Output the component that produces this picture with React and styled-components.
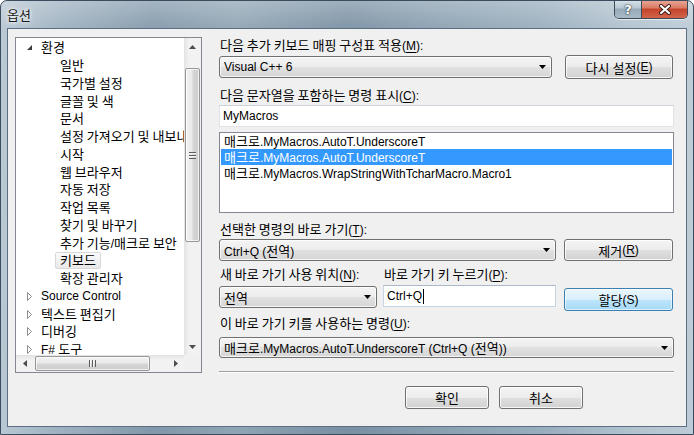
import React from 'react';
import styled, { createGlobalStyle } from 'styled-components';

const GlobalStyle = createGlobalStyle`
  html, body {
    margin: 0;
    padding: 0;
    background: #ffffff;
  }
  body {
    font-family: "Liberation Sans", "Noto Sans CJK KR", sans-serif;
    font-size: 12px;
    color: #000;
  }
  * { box-sizing: border-box; }
`;

//tree data
const treeItems = [
  { label: '환경', level: 0, expander: 'open' },
  { label: '일반', level: 1 },
  { label: '국가별 설정', level: 1 },
  { label: '글꼴 및 색', level: 1 },
  { label: '문서', level: 1 },
  { label: '설정 가져오기 및 내보내기', level: 1 },
  { label: '시작', level: 1 },
  { label: '웹 브라우저', level: 1 },
  { label: '자동 저장', level: 1 },
  { label: '작업 목록', level: 1 },
  { label: '찾기 및 바꾸기', level: 1 },
  { label: '추가 기능/매크로 보안', level: 1 },
  { label: '키보드', level: 1, selected: true },
  { label: '확장 관리자', level: 1 },
  { label: 'Source Control', level: 0, expander: 'closed' },
  { label: '텍스트 편집기', level: 0, expander: 'closed' },
  { label: '디버깅', level: 0, expander: 'closed' },
  { label: 'F# 도구', level: 0, expander: 'closed' },
];

const commands = [
  '매크로.MyMacros.AutoT.UnderscoreT',
  '매크로.MyMacros.AutoT.UnderscoreT',
  '매크로.MyMacros.WrapStringWithTcharMacro.Macro1',
];

// hangul runs get the CJK face, a touch larger so they keep Malgun's width
const HANGUL_RUN = /([\uac00-\ud7a3]+(?:[ ]+[\uac00-\ud7a3]+)*)/;

function Txt({ children }) {
  return (
    <>
      {String(children).split(HANGUL_RUN).map((part, i) =>
        /[\uac00-\ud7a3]/.test(part) ? <Ko key={i}>{part}</Ko> : part
      )}
    </>
  );
}

function Arrow({ dir = 'down', color = '#000' }) {
  const pts = {
    down: '0,0 7,0 3.5,4',
    up: '0,4 7,4 3.5,0',
    left: '4,0 4,7 0,3.5',
    right: '0,0 0,7 4,3.5',
  }[dir];
  const vertical = dir === 'up' || dir === 'down';
  return (
    <svg width={vertical ? 7 : 4} height={vertical ? 4 : 7} viewBox={vertical ? '0 0 7 4' : '0 0 4 7'}>
      <polygon points={pts} fill={color} />
    </svg>
  );
}

function Expander({ type }) {
  if (type === 'open') {
    return (
      <ExpanderBox>
        <svg width="7" height="7" viewBox="0 0 7 7">
          <polygon points="6,1 6,6 1,6" fill="#3c3c3c" />
        </svg>
      </ExpanderBox>
    );
  }
  return (
    <ExpanderBox>
      <svg width="7" height="9" viewBox="0 0 7 9">
        <polygon points="1.5,0.5 1.5,8.5 5.5,4.5" fill="#fff" stroke="#8c8c8c" strokeWidth="1" />
      </svg>
    </ExpanderBox>
  );
}

function App() {
  return (
    <>
      <GlobalStyle />
      <Window>
        <TitleBar>
          <Title><Txt>옵션</Txt></Title>
          <Controls>
            <HelpBtn>?</HelpBtn>
            <CloseBtn>
              <svg width="14" height="11" viewBox="0 0 14 11">
                <path d="M3 2 L11 9 M11 2 L3 9" stroke="#3b1a14" strokeWidth="4" strokeLinecap="round" />
                <path d="M3 2 L11 9 M11 2 L3 9" stroke="#fff" strokeWidth="2.2" strokeLinecap="round" />
              </svg>
            </CloseBtn>
          </Controls>
        </TitleBar>

        <Client>
          <Tree>
            <TreeContent>
              {treeItems.map((item, i) => (
                <TreeRow key={i} $level={item.level}>
                  {item.expander && <Expander type={item.expander} />}
                  <TreeLabel $selected={item.selected}><Txt>{item.label}</Txt></TreeLabel>
                </TreeRow>
              ))}
            </TreeContent>
            <ScrollBar $vertical>
              <ScrollArrow $vertical><Arrow dir="up" color="#4d4d4d" /></ScrollArrow>
              <Thumb $vertical $offset={13} $length={174}><Grip $vertical /></Thumb>
              <ScrollArrow $vertical $end><Arrow dir="down" color="#4d4d4d" /></ScrollArrow>
            </ScrollBar>
            <ScrollBar>
              <ScrollArrow><Arrow dir="left" color="#4d4d4d" /></ScrollArrow>
              <Thumb $offset={2} $length={115}><Grip /></Thumb>
              <ScrollArrow $end><Arrow dir="right" color="#4d4d4d" /></ScrollArrow>
            </ScrollBar>
            <Corner />
          </Tree>

          <Panel>
            <Label><Txt>다음 추가 키보드 매핑 구성표 적용</Txt>(<u>M</u>):</Label>
            <FieldRow $mt={2}>
              <Combo $w={333}>
                <span>Visual C++ 6</span>
                <ComboArrow><Arrow /></ComboArrow>
              </Combo>
              <Button $w={108} $h={24} $ml={13}><Txt>다시 설정</Txt>(<u>E</u>)</Button>
            </FieldRow>

            <Label $mt={8}><Txt>다음 문자열을 포함하는 명령 표시</Txt>(<u>C</u>):</Label>
            <TextBox $mt={2} $light>MyMacros</TextBox>

            <ListBox>
              {commands.map((c, i) => (
                <ListRow key={i} $selected={i === 1}><Txt>{c}</Txt></ListRow>
              ))}
            </ListBox>

            <Label $mt={8}><Txt>선택한 명령의 바로 가기</Txt>(<u>T</u>):</Label>
            <FieldRow $mt={2}>
              <Combo $w={337}>
                <span>Ctrl+Q (<Txt>전역</Txt>)</span>
                <ComboArrow><Arrow /></ComboArrow>
              </Combo>
              <Button $w={109} $ml={8}><Txt>제거</Txt>(<u>R</u>)</Button>
            </FieldRow>

            <FieldRow $mt={5}>
              <Label $w={164}><Txt>새 바로 가기 사용 위치</Txt>(<u>N</u>):</Label>
              <Label><Txt>바로 가기 키 누르기</Txt>(<u>P</u>):</Label>
            </FieldRow>
            <FieldRow $mt={3} $align="flex-start">
              <Combo $w={158} $mt={1}>
                <span><Txt>전역</Txt></span>
                <ComboArrow><Arrow /></ComboArrow>
              </Combo>
              <TextBox $w={173} $ml={6} $focused>
                Ctrl+Q<Caret />
              </TextBox>
              <Button $w={109} $h={23} $ml={8} $mt={3} $default><Txt>할당</Txt>(S)</Button>
            </FieldRow>

            <Label $mt={4}><Txt>이 바로 가기 키를 사용하는 명령</Txt>(<u>U</u>):</Label>
            <Combo $mt={6} $h={21}>
              <span><Txt>매크로</Txt>.MyMacros.AutoT.UnderscoreT (Ctrl+Q (<Txt>전역</Txt>))</span>
              <ComboArrow><Arrow /></ComboArrow>
            </Combo>

            <Separator />

            <Footer>
              <Button $w={84} $h={23}><Txt>확인</Txt></Button>
              <Button $w={84} $h={23} $ml={10}><Txt>취소</Txt></Button>
            </Footer>
          </Panel>
        </Client>
      </Window>
    </>
  );
}

const Ko = styled.span`
  font-family: "Noto Sans CJK KR", sans-serif;
  font-size: 13px;
`;

const Window = styled.div`
  width: 694px;
  height: 435px;
  display: flex;
  flex-direction: column;
  border: 1px solid #3a4c5d;
  border-radius: 7px 7px 0 0;
  overflow: hidden;
  background:
    linear-gradient(180deg, rgba(255,255,255,0.28) 0px, rgba(255,255,255,0.05) 28px, rgba(255,255,255,0) 100%),
    linear-gradient(90deg, #b8c7d3 0%, #9fb2c1 8%, #8298aa 22%, #8fa4b4 34%, #7990a3 50%, #8ba1b2 64%, #98adbd 78%, #b0c1ce 90%, #bccbd6 100%);
`;

const TitleBar = styled.div`
  height: 27px;
  display: flex;
  align-items: flex-start;
  padding-left: 6px;
`;

const Title = styled.div`
  margin-top: 5px;
  line-height: 18px;
  color: #1b1b1b;
  text-shadow: 0 0 6px #ffffff, 0 0 3px #ffffff;
`;

const Controls = styled.div`
  margin-left: auto;
  margin-right: 5px;
  display: flex;
  height: 19px;
  margin-top: -1px;
  border: 1px solid #3b4a58;
  border-top: none;
  border-radius: 0 0 5px 5px;
  overflow: hidden;
  box-shadow: 0 1px 0 rgba(255,255,255,0.6);
`;

const HelpBtn = styled.div`
  width: 27px;
  display: flex;
  align-items: center;
  justify-content: center;
  font-family: "DejaVu Sans", sans-serif;
  font-weight: bold;
  font-size: 13px;
  color: #fff;
  text-shadow: 0 0 2px #202a33, 0 0 1px #202a33;
  border-right: 1px solid #3b4a58;
  background: linear-gradient(180deg, #d9e2e9 0%, #b7c6d2 45%, #96a9b8 50%, #a9bac7 100%);
`;

const CloseBtn = styled.div`
  width: 45px;
  display: flex;
  align-items: center;
  justify-content: center;
  background: linear-gradient(180deg, #e9a99b 0%, #d97a63 45%, #c4432a 50%, #d2654c 100%);
`;

const Client = styled.div`
  flex: 1;
  margin: 0 6px 7px 6px;
  border: 1px solid #5d7083;
  background: #f0f0f0;
  padding: 8px 12px 0 7px;
  display: grid;
  grid-template-columns: 187px 1fr;
  column-gap: 17px;
  align-items: start;
`;

const Tree = styled.div`
  height: 336px;
  border: 1px solid #828790;
  background: #fff;
  display: grid;
  grid-template-columns: 1fr 17px;
  grid-template-rows: 1fr 17px;
  overflow: hidden;
`;

const TreeContent = styled.div`
  overflow: hidden;
  white-space: nowrap;
  padding-top: 1px;
`;

const TreeRow = styled.div`
  height: 17.75px;
  display: flex;
  align-items: center;
  padding-left: ${p => (p.$level === 0 ? 10 : 44)}px;
`;

const ExpanderBox = styled.span`
  width: 15px;
  display: inline-flex;
  align-items: center;
`;

const TreeLabel = styled.span`
  line-height: 14px;
  padding: ${p => (p.$selected ? '0 4px' : '0')};
  margin-left: ${p => (p.$selected ? '-5px' : '0')};
  border: ${p => (p.$selected ? '1px solid #d9d9d9' : 'none')};
  border-radius: 2px;
  background: ${p => (p.$selected ? 'linear-gradient(180deg, #fafafa, #e8e8e8)' : 'transparent')};
`;

const ScrollBar = styled.div`
  display: flex;
  flex-direction: ${p => (p.$vertical ? 'column' : 'row')};
  background: ${p => (p.$vertical
    ? 'linear-gradient(90deg, #e3e3e3 0%, #f2f2f2 30%, #f2f2f2 100%)'
    : 'linear-gradient(180deg, #e3e3e3 0%, #f2f2f2 30%, #f2f2f2 100%)')};
`;

const ScrollArrow = styled.div`
  flex: none;
  width: 17px;
  height: 17px;
  display: flex;
  align-items: center;
  justify-content: center;
  margin-${p => (p.$vertical ? 'top' : 'left')}: ${p => (p.$end ? 'auto' : '0')};
`;

const Thumb = styled.div`
  flex: none;
  display: flex;
  align-items: center;
  justify-content: center;
  border: 1px solid #979797;
  border-radius: 2px;
  ${p => (p.$vertical
    ? `width: 15px; height: ${p.$length}px; margin: ${p.$offset}px 0 0 1px;
       background: linear-gradient(90deg, #f3f3f3 0%, #e9e9e9 45%, #d6d6d6 55%, #cccccc 100%);`
    : `height: 15px; width: ${p.$length}px; margin: 1px 0 0 ${p.$offset}px;
       background: linear-gradient(180deg, #f3f3f3 0%, #e9e9e9 45%, #d6d6d6 55%, #cccccc 100%);`)}
  box-shadow: inset 0 0 0 1px rgba(255,255,255,0.7);
`;

const Grip = styled.div`
  width: 7px;
  height: 7px;
  background: repeating-linear-gradient(
    ${p => (p.$vertical ? '180deg' : '90deg')},
    #5c5c5c 0 1px, #f4f4f4 1px 2px, transparent 2px 3px
  );
`;

const Corner = styled.div`
  background: #f0f0f0;
`;

const Panel = styled.div`
  display: flex;
  flex-direction: column;
`;

const Label = styled.div`
  flex: none;
  height: 16px;
  line-height: 16px;
  padding-left: 1px;
  width: ${p => (p.$w ? `${p.$w}px` : 'auto')};
  margin-top: ${p => p.$mt ?? 0}px;
  white-space: nowrap;
  u { text-underline-offset: 2px; }
`;

const FieldRow = styled.div`
  display: flex;
  align-items: ${p => p.$align ?? 'center'};
  margin-top: ${p => p.$mt ?? 0}px;
`;

const Combo = styled.div`
  flex: none;
  width: ${p => (p.$w ? `${p.$w}px` : '100%')};
  height: ${p => p.$h ?? 22}px;
  margin-top: ${p => p.$mt ?? 0}px;
  display: flex;
  align-items: center;
  padding: 0 5px 0 4px;
  border: 1px solid #707070;
  border-radius: 3px;
  background: linear-gradient(180deg, #f4f4f4 0%, #ececec 50%, #e1e1e1 50%, #d6d6d6 100%);
  box-shadow: inset 0 0 0 1px rgba(255,255,255,0.75);
  white-space: nowrap;
`;

const ComboArrow = styled.span`
  margin-left: auto;
  display: flex;
  align-items: center;
`;

const Button = styled.div`
  flex: none;
  width: ${p => p.$w}px;
  height: ${p => p.$h ?? 22}px;
  margin-left: ${p => p.$ml ?? 0}px;
  margin-top: ${p => p.$mt ?? 0}px;
  display: flex;
  align-items: center;
  justify-content: center;
  border: 1px solid ${p => (p.$default ? '#3c7fb1' : '#707070')};
  border-radius: 3px;
  background: ${p => (p.$default
    ? 'linear-gradient(180deg, #eaf6fd 0%, #d9f0fc 50%, #bee6fd 50%, #a7d9f5 100%)'
    : 'linear-gradient(180deg, #f4f4f4 0%, #ececec 50%, #dfdfdf 50%, #d2d2d2 100%)')};
  box-shadow: inset 0 0 0 1px ${p => (p.$default ? 'rgba(255,255,255,0.6)' : 'rgba(255,255,255,0.8)')};
  white-space: nowrap;
  u { text-underline-offset: 2px; }
`;

const TextBox = styled.div`
  flex: none;
  width: ${p => (p.$w ? `${p.$w}px` : '100%')};
  height: 22px;
  margin-top: ${p => p.$mt ?? 0}px;
  margin-left: ${p => p.$ml ?? 0}px;
  display: flex;
  align-items: center;
  padding-left: 3px;
  background: #fff;
  border: 1px solid ${p => (p.$light ? '#dfe3e8' : '#c5d5e3')};
  border-top-color: ${p => (p.$light ? '#cfd3d9' : '#abb9c7')};
`;

const Caret = styled.span`
  display: inline-block;
  width: 1px;
  height: 15px;
  background: #000;
  margin-left: 1px;
`;

const ListBox = styled.div`
  height: 81px;
  margin-top: 5px;
  border: 1px solid #828790;
  background: #fff;
  padding: 0 1px;
`;

const ListRow = styled.div`
  height: 16px;
  line-height: 16px;
  padding-left: 3px;
  white-space: nowrap;
  background: ${p => (p.$selected ? '#3399ff' : 'transparent')};
  color: ${p => (p.$selected ? '#fff' : '#000')};
`;

const Separator = styled.div`
  height: 1px;
  margin-top: 13px;
  background: #a0a0a0;
  box-shadow: 0 1px 0 #ffffff;
`;

const Footer = styled.div`
  display: flex;
  justify-content: flex-end;
  margin-top: 14px;
  padding-right: 91px;
`;

export default App;
